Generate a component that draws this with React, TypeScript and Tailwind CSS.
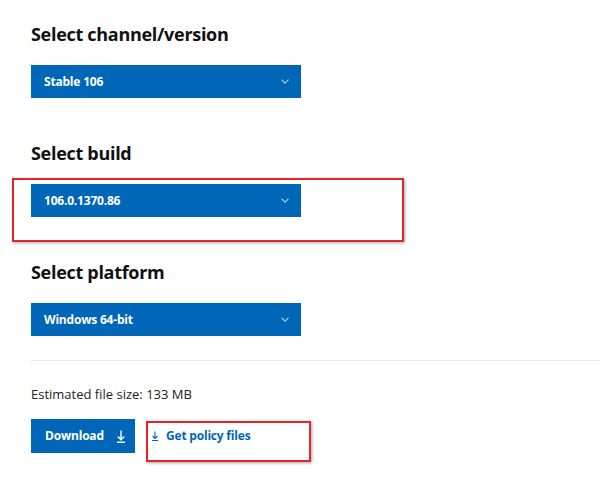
import { ReactNode } from 'react'

const FONT = { fontFamily: '"Open Sans", "Noto Sans", sans-serif' }

function Chevron() {
  return (
    <svg width="8" height="5" viewBox="0 0 8 5" fill="none" stroke="#a8d4f5" strokeWidth="1.1" aria-hidden>
      <path d="M0.5 0.7l3.5 3.5 3.5-3.5" />
    </svg>
  )
}

function DownArrow({ color, w, h }: { color: string; w: number; h: number }) {
  return (
    <svg width={w} height={h} viewBox="0 0 8 13" fill="none" stroke={color} strokeWidth="1.4" aria-hidden preserveAspectRatio="none">
      <path d="M4 0.5v9M0.8 6.5l3.2 3.2 3.2-3.2M0 12.3h8" />
    </svg>
  )
}

function Section({ title, value, top, children }: { title: string; value: string; top: string; children?: ReactNode }) {
  return (
    <div className={`relative ${top}`}>
      <h2 className="h-[24px] text-[18px] font-bold leading-[24px] tracking-[-0.3px] text-[#111]">{title}</h2>
      <div className="mt-[19px] flex h-[33px] w-[270px] items-center justify-between bg-[#0067b8] pl-[13px] pr-[12px]">
        <span className="text-[12px] font-bold tracking-[-0.2px] text-white">{value}</span>
        <Chevron />
      </div>
      {children}
    </div>
  )
}

export default function App() {
  return (
    <div className="relative h-[486px] w-[610px] overflow-hidden bg-white pl-[31px] pt-[22px]" style={FONT}>
      <Section title="Select channel/version" value="Stable 106" top="" />
      <Section title="Select build" value="106.0.1370.86" top="mt-[43px]" />
      <Section title="Select platform" value="Windows 64-bit" top="mt-[43px]" />

      <div className="mt-[24px] h-px w-[569px] bg-[#e6e6e6]" />

      <p className="mt-[24px] text-[13px] leading-[18px] text-[#222]">Estimated file size: 133 MB</p>

      <div className="mt-[16px] flex items-center gap-[17px]">
        <div className="flex h-[34px] w-[104px] items-center gap-[13px] bg-[#0067b8] pl-[14px]">
          <span className="text-[12px] font-bold tracking-[-0.2px] text-white">Download</span>
          <DownArrow color="#ffffff" w={8} h={13} />
        </div>
        <div className="flex items-center gap-[8px] text-[#0067b8]">
          <DownArrow color="#0067b8" w={6} h={10} />
          <span className="text-[12px] font-bold tracking-[-0.2px]">Get policy files</span>
        </div>
      </div>

      {/* red annotation boxes */}
      <div className="absolute left-[12px] top-[178px] h-[64px] w-[392px] border-2 border-[#e0262b] shadow-[1px_1px_3px_rgba(0,0,0,0.35)]" />
      <div className="absolute left-[146px] top-[421px] h-[41px] w-[165px] border-2 border-[#e0262b] shadow-[1px_1px_3px_rgba(0,0,0,0.35)]" />
    </div>
  )
}
